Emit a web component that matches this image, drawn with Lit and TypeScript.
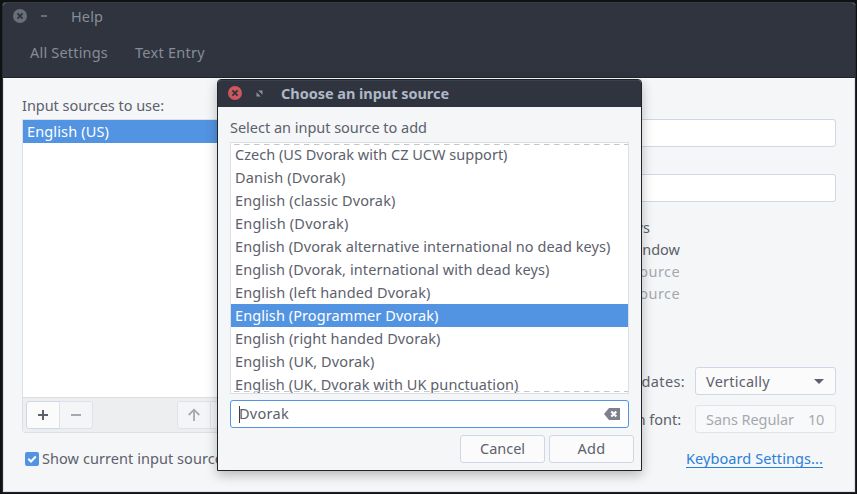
import { LitElement, html, css } from "lit";
import { customElement, property } from "lit/decorators.js";

/** A single-line label whose tracking is adjusted so that it spans a given width. */
@customElement("ui-label")
class UiLabel extends LitElement {
  @property({ type: Number }) width = 0;
  @property() text = "";

  static styles = css`
    :host { display: inline-block; white-space: nowrap; flex: none; }
    span { display: inline-block; white-space: pre; }
  `;

  render() {
    return html`<span>${this.text}</span>`;
  }

  updated() {
    const span = this.renderRoot.querySelector("span") as HTMLElement;
    if (!this.width) return;
    span.style.letterSpacing = "0";
    const natural = span.getBoundingClientRect().width;
    span.style.letterSpacing = (this.width - natural) / this.text.length + "px";
  }
}

const label = (text: string, width: number) =>
  html`<ui-label .text=${text} .width=${width}></ui-label>`;

const closeIcon = (disc: string, cross: string) => html`
  <svg class="close" width="14" height="14" viewBox="0 0 14 14">
    <circle cx="7" cy="7" r="7" fill=${disc}></circle>
    <path d="M4.4 4.4 9.6 9.6M9.6 4.4 4.4 9.6" stroke=${cross} stroke-width="1.8"></path>
  </svg>`;

const dashes = html`
  <svg class="dashes" height="1" width="397">
    <path d="M3 .5H397" stroke="#c4c6c8" stroke-dasharray="5.5 4.5"></path>
  </svg>`;

@customElement("source-dialog")
class SourceDialog extends LitElement {
  private items: [string, number][] = [
    ["Czech (US Dvorak with CZ UCW support)", 272.5],
    ["Danish (Dvorak)", 110.5],
    ["English (classic Dvorak)", 160.5],
    ["English (Dvorak)", 113.5],
    ["English (Dvorak alternative international no dead keys)", 375.5],
    ["English (Dvorak, international with dead keys)", 314.5],
    ["English (left handed Dvorak)", 195.5],
    ["English (Programmer Dvorak)", 203.5],
    ["English (right handed Dvorak)", 205.5],
    ["English (UK, Dvorak)", 139.5],
    ["English (UK, Dvorak with UK punctuation)", 283.5],
  ];

  static styles = css`
    * { box-sizing: border-box; }
    :host {
      display: flex; flex-direction: column; box-sizing: border-box;
      width: 425px; height: 392px; background: #f5f6f7;
      border: 1px solid #20232b; border-radius: 4px 4px 0 0;
      box-shadow: 0 4px 12px rgba(0, 0, 0, 0.26);
    }
    .title {
      height: 27px; flex: none; display: flex; align-items: center;
      padding-left: 10px; background: #2f343f; color: #afb8c6;
      border-top: 1px solid #3a404c; border-radius: 3px 3px 0 0; font-weight: bold;
    }
    .close { margin-bottom: 2px; }
    .title ui-label { padding-bottom: 2px; }
    .grow { margin: 0 18px 2px 14px; }
    .content { flex: 1; padding: 9px 12px 0; display: flex; flex-direction: column; }
    .prompt { height: 22px; line-height: 22px; margin-bottom: 4px; }
    .list {
      position: relative; height: 252px; width: 399px; flex: none; background: #fff;
      border: 1px solid #dcdfe3; overflow: hidden; margin-bottom: 6px;
    }
    .row { height: 23px; line-height: 23px; padding-left: 4px; }
    .row.selected { background: #5294e2; color: #fff; }
    .dashes { display: block; }
    .edge-top { position: absolute; top: 1px; left: 0; height: 1px; }
    .edge-bottom { position: absolute; bottom: 1px; left: 0; height: 1px; }
    .search {
      height: 28px; width: 399px; border: 1px solid #5294e2; border-radius: 3px;
      background: #fff; display: flex; align-items: center; padding: 0 8px;
      justify-content: space-between; margin-bottom: 7px; flex: none;
    }
    .entry { display: flex; align-items: center; }
    .entry ui-label { padding-bottom: 2px; }
    .caret { width: 1px; height: 17px; background: #3b3f49; margin-right: -1px; }
    .actions { display: flex; gap: 4px; justify-content: flex-end; margin-right: -5px; }
    .button {
      width: 85px; height: 28px; border: 1px solid #cfd6e6; border-radius: 3px;
      background: #fbfbfc; display: flex; align-items: center; justify-content: center; padding-bottom: 2px;
    }
  `;

  render() {
    return html`
      <div class="title">
        ${closeIcon("#cc575d", "#2f343f")}
        <svg class="grow" width="7" height="7" viewBox="0 0 7 7" fill="#8b929f">
          <path d="M2.2 .5H6.5V4.8ZM.5 2.2V6.5H4.8Z"></path>
        </svg>
        ${label("Choose an input source", 168)}
      </div>
      <div class="content">
        <div class="prompt">${label("Select an input source to add", 197)}</div>
        <div class="list">
          ${this.items.map(([text, width], i) => html`
            <div class="row ${i === 7 ? "selected" : ""}">${label(text, width)}</div>`)}
          <div class="edge-top">${dashes}</div>
          <div class="edge-bottom">${dashes}</div>
        </div>
        <div class="search">
          <div class="entry"><div class="caret"></div>${label("Dvorak", 50)}</div>
          <svg width="16" height="12" viewBox="0 0 16 12">
            <path d="M0 6 5 0H16V12H5Z" fill="#7c818b"></path>
            <path d="M7.3 3.5 12.3 8.5M12.3 3.5 7.3 8.5" stroke="#fff" stroke-width="2.2"></path>
          </svg>
        </div>
        <div class="actions">
          <div class="button">${label("Cancel", 45)}</div>
          <div class="button">${label("Add", 28)}</div>
        </div>
      </div>
    `;
  }
}

@customElement("app-root")
class AppRoot extends LitElement {
  static styles = css`
    * { box-sizing: border-box; }
    :host {
      display: block; position: relative; box-sizing: border-box; overflow: hidden;
      width: 857px; height: 494px; padding: 2px 1px 2px 2px; background: #101113;
      font: 14.5px/22px "Noto Sans", sans-serif; color: #5c616c;
    }
    .window {
      height: 491px; display: flex; flex-direction: column; background: #f5f6f7;
      border: 1px solid #262a33; border-top-color: #353a45; border-bottom-color: #20232b;
      border-radius: 4px 4px 0 0; overflow: hidden;
    }
    .header { height: 75px; flex: none; background: #2f343f; border-bottom: 1px solid #20242c; color: #868d99; }
    .titlebar { height: 27px; display: flex; align-items: center; padding-left: 10px; }
    .titlebar .close { margin-bottom: 1px; }
    .titlebar ui-label { padding-bottom: 1px; }
    .minimize { width: 6px; height: 2px; background: #686f7b; margin: 0 24px 1px 14px; }
    .menu { display: flex; gap: 27px; padding: 11px 0 0 27px; }
    .body {
      flex: 1; display: flex; justify-content: space-between;
      padding: 15px 18px 0; border: 1px solid #dce0e6; border-top-color: #fbfbfc;
    }
    .left { width: 360px; }
    .caption { height: 22px; margin-bottom: 3px; }
    .sources { height: 314px; border: 1px solid #dcdfe3; background: #fff; display: flex; flex-direction: column; border-radius: 0 0 3px 3px; }
    .source { height: 23px; line-height: 23px; background: #5294e2; color: #fff; padding-left: 4px; }
    .tools { margin-top: auto; height: 35px; background: #edeeef; border-top: 1px solid #dcdfe3; display: flex; padding: 3px; }
    .tool {
      width: 34px; height: 28px; border: 1px solid #dce1ec; background: #f4f5f7;
      display: flex; align-items: center; justify-content: center; padding-bottom: 1px;
    }
    .tool + .tool { margin-left: -1px; }
    .tool.on { border-color: #cfd6e6; background: #fbfbfc; }
    .first { border-radius: 3px 0 0 3px; }
    .last { border-radius: 0 3px 3px 0; }
    .tools .tool.up { margin-left: 84px; }
    .toggle { display: flex; align-items: center; gap: 3px; padding-left: 3px; margin-top: 15px; height: 22px; }
    .toggle ui-label { padding-bottom: 2px; }
    .right { width: 420px; display: flex; flex-direction: column; padding-top: 25px; }
    .field { height: 28px; flex: none; background: #fff; border: 1px solid #cfd6e6; border-radius: 3px; }
    .field + .field { margin-top: 27px; }
    .options { margin: 14px 156px 63px 0; display: flex; flex-direction: column; align-items: flex-end; }
    .option { height: 22px; }
    .option.short { padding-right: 30px; }
    .dim { color: #a5a9af; }
    .setting { display: flex; align-items: center; justify-content: flex-end; height: 28px; margin-bottom: 10px; }
    .setting ui-label { padding-bottom: 1px; }
    .choice {
      width: 141px; height: 28px; border: 1px solid #cfd6e6; border-radius: 3px; background: #fbfbfc;
      display: flex; align-items: center; justify-content: space-between; padding: 0 11px 0 10px; margin-left: 10px;
    }
    .choice.off { border-color: #e0e4ed; background: #f8f9fa; color: #a5a9af; margin-left: 14px; }
    .link-line { display: flex; justify-content: flex-end; padding-right: 13px; margin-top: 4px; }
    .link { color: #2a7fdb; height: 21px; border-bottom: 1px solid #2a7fdb; }
    source-dialog { position: absolute; left: 217px; top: 79px; }
  `;

  render() {
    return html`
      <div class="window">
        <div class="header">
          <div class="titlebar">
            ${closeIcon("#686f7b", "#2f343f")}
            <div class="minimize"></div>
            ${label("Help", 32)}
          </div>
          <div class="menu">${label("All Settings", 78)}${label("Text Entry", 70)}</div>
        </div>
        <div class="body">
          <div class="left">
            <div class="caption">${label("Input sources to use:", 142)}</div>
            <div class="sources">
              <div class="source">${label("English (US)", 82)}</div>
              <div class="tools">
                <div class="tool first on">
                  <svg width="12" height="12"><path d="M1 6H11M6 1V11" stroke="#5c616c" stroke-width="2"></path></svg>
                </div>
                <div class="tool last">
                  <svg width="12" height="12"><path d="M1 6H11" stroke="#a5a9af" stroke-width="2"></path></svg>
                </div>
                <div class="tool first up">
                  <svg width="14" height="14"><path d="M7 13V2M1.7 7 7 1.7 12.3 7" fill="none" stroke="#a5a9af" stroke-width="1.8"></path></svg>
                </div>
                <div class="tool last"></div>
              </div>
            </div>
            <div class="toggle">
              <svg width="14" height="14">
                <rect width="14" height="14" rx="2" fill="#5294e2"></rect>
                <path d="M3.3 6.8 6 9.5 10.8 4.5" fill="none" stroke="#fff" stroke-width="2"></path>
              </svg>
              ${label("Show current input source", 181)}
            </div>
          </div>
          <div class="right">
            <div class="field"></div>
            <div class="field"></div>
            <div class="options">
              <div class="option short">${label("windows", 60)}</div>
              <div class="option">${label("window", 53)}</div>
              <div class="option dim">${label("source", 48)}</div>
              <div class="option dim">${label("source", 48)}</div>
            </div>
            <div class="setting">
              ${label("candidates:", 82)}
              <div class="choice">
                ${label("Vertically", 64)}
                <svg width="10" height="5"><path d="M0 0H10L5 5Z" fill="#5c616c"></path></svg>
              </div>
            </div>
            <div class="setting">
              ${label("Custom font:", 88)}
              <div class="choice off">${label("Sans Regular", 88)}${label("10", 16)}</div>
            </div>
            <div class="link-line"><div class="link">${label("Keyboard Settings...", 137)}</div></div>
          </div>
        </div>
      </div>
      <source-dialog></source-dialog>
    `;
  }
}
